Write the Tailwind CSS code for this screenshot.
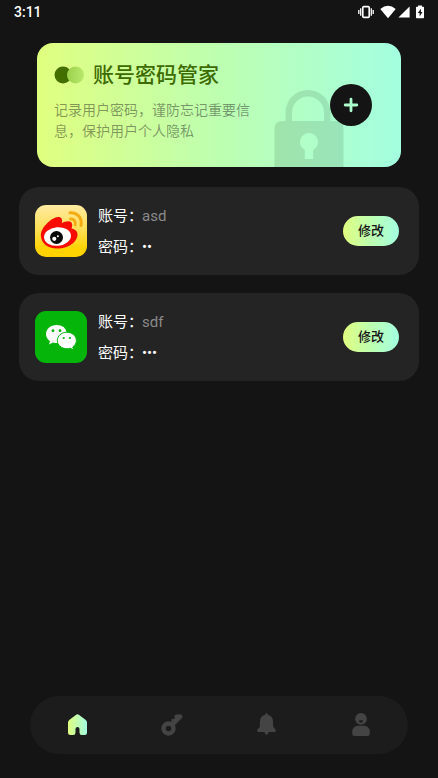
<!DOCTYPE html>
<html lang="zh-CN">
<head>
<meta charset="utf-8">
<meta name="viewport" content="width=device-width, initial-scale=1">
<title>账号密码管家</title>
<script src="https://cdn.jsdelivr.net/npm/@tailwindcss/browser@4"></script>
</head>
<body class="flex min-h-screen flex-col bg-[#141414] font-[Roboto,'Noto_Sans_CJK_SC',sans-serif] text-white">
<header class="flex h-6 items-center justify-between pr-3 pl-3.5 text-sm font-medium">
  <span>3:11</span>
  <div class="flex items-center">
    <svg class="mr-1.5 h-3.5 w-4" viewBox="0 0 16 14" fill="none" stroke="#fff" aria-hidden="true"><rect x="4.8" y="1.6" width="6.4" height="10.800" rx="1" stroke-width="1.6"/><path d="M2.700 3.200v7.600M.8 5v4M13.300 3.200v7.600M15.200 5v4" stroke-width="1.3"/></svg>
    <svg class="mr-0.5 h-3.5 w-4" viewBox="0 0 16 14" fill="#fff" aria-hidden="true"><path d="M.3 4Q8-2.300 15.700 4L8 13.200Z"/></svg>
    <svg class="mr-1 h-3.5 w-3" viewBox="0 0 12 14" fill="#fff" aria-hidden="true"><path d="M11.600 1.600v11H.4Z"/></svg>
    <svg class="h-3.5 w-3" viewBox="0 0 12 14" aria-hidden="true"><path fill="#fff" d="M4 .4h4V1.700h1.200q.8 0 .8.8v10q0 .8-.8.8H2.800q-.8 0-.8-.8V2.500Q2 1.700 2.800 1.700H4Z"/><path fill="#141414" d="M6.900 3.800 3.800 8.100h1.800v3.300l2.900-4.500H6.900Z"/></svg>
  </div>
</header>
<main class="flex flex-1 flex-col">
  <section class="relative mx-[37px] mt-[19px] flex h-[124px] flex-col overflow-hidden rounded-2xl bg-linear-to-r from-[#e0ff7e] via-[#bdffb0] to-[#a3ffe0] px-[17px] pt-4">
    <svg class="absolute right-[57px] bottom-0 h-[78px] w-[70px]" viewBox="0 0 70 78" aria-hidden="true"><g fill="#5a8a67" fill-opacity=".23"><path d="M11.500 32V23.500a22.500 22.500 0 0 1 45 0V32H50V23.500a16 16 0 0 0-32 0V32Z"/><path fill-rule="evenodd" d="M8 32H62Q69.500 32 69.500 39.500V78H.5V39.500Q.5 32 8 32ZM35 44a9 9 0 0 0-4.200 17V70h8.400V61A9 9 0 0 0 35 44Z"/></g></svg>
    <div class="flex items-center gap-2">
      <svg class="h-[18px] w-[31px]" viewBox="0 0 31 18" aria-hidden="true"><defs><linearGradient id="disc"><stop stop-color="#9bd14c"/><stop offset="1" stop-color="#b9e96c"/></linearGradient></defs><circle cx="9" cy="9" r="8.500" fill="#426e00"/><circle cx="21.500" cy="9" r="8.500" fill="url(#disc)"/></svg>
      <h1 class="text-[21px] leading-8 font-medium text-[#3c6b00]">账号密码管家</h1>
    </div>
    <p class="mt-[9px] w-[200px] text-sm leading-[21px] text-[#141414]/45">记录用户密码，谨防忘记重要信息，保护用户个人隐私</p>
    <button type="button" aria-label="添加账号" class="absolute top-[41px] right-[29px] flex size-[42px] items-center justify-center rounded-full bg-[#141414]">
      <svg class="size-4" viewBox="0 0 16 16" fill="none" stroke="#adffcc" stroke-width="2.800" stroke-linecap="round" aria-hidden="true"><path d="M8 2.200v11.600M2.200 8h11.600"/></svg>
    </button>
  </section>
  <ul class="mx-[19px] mt-5 flex flex-col gap-[18px]">
    <li class="flex h-[88px] items-center rounded-[20px] bg-[#242424] pr-5 pl-4">
      <svg class="size-[52px]" viewBox="0 0 52 52" role="img" aria-label="微博"><defs><linearGradient id="gold" x2="0" y2="1"><stop stop-color="#ffeaa2"/><stop offset=".5" stop-color="#ffdf50"/><stop offset=".85" stop-color="#ffd200"/></linearGradient></defs><rect width="52" height="52" rx="11" fill="url(#gold)"/><path fill="#f90b00" d="M6 32C5 26 9 21 14 16.500C19 12 25 10.500 26.500 13.500C27.500 15 27 17 26.800 18.200C31 15.500 36 15.500 37 18.500C37.500 20 37 22 36.500 23.500C40 24 42.500 26 42.500 29.500C42.500 36 35 43 24 43.500C14 44 7 39.500 6 32Z"/><ellipse cx="22.500" cy="31.500" rx="13.500" ry="9.300" fill="#fff" transform="rotate(-5 22.500 31.500)"/><circle cx="21.500" cy="32.500" r="6.500" fill="#0a0a0a"/><circle cx="19.300" cy="33.800" r="2.100" fill="#fff"/><circle cx="22.900" cy="31.300" r="1" fill="#fff"/><g fill="none" stroke="#f5ab13" stroke-linecap="round"><path d="M35 7.800C42 7 47.500 13 46 20.500" stroke-width="3"/><path d="M35.500 14C38.500 13.500 41.200 16.500 40.200 20" stroke-width="2.800"/></g></svg>
      <dl class="ml-[11px] flex flex-1 flex-col gap-[9px] text-[15px] leading-[22px]">
        <div class="flex"><dt class="w-11 whitespace-nowrap">账号：</dt><dd class="text-[#8a8a8a]">asd</dd></div>
        <div class="flex"><dt class="w-11 whitespace-nowrap">密码：</dt><dd>••</dd></div>
      </dl>
      <button type="button" class="h-[30px] w-14 rounded-full bg-linear-to-r from-[#e0ff7e] via-[#bdffb0] to-[#a3ffe0] text-[13px] font-medium text-[#141414]">修改</button>
    </li>
    <li class="flex h-[88px] items-center rounded-[20px] bg-[#242424] pr-5 pl-4">
      <svg class="size-[52px]" viewBox="0 0 52 52" role="img" aria-label="微信"><rect width="52" height="52" rx="11" fill="#05b50a"/><path fill="#fff" d="M21.500 14C15.500 14 11 18 11 23C11 26 12.500 28.500 15 30.200L14 33.500L18 31.400Q21.500 32.400 24 31.800L32 23Q31 14 21.500 14Z"/><path fill="#fff" stroke="#05b50a" stroke-width="1" d="M31.800 21.200C26.600 21.200 22.300 24.800 22.300 29.500C22.300 34.200 26.600 37.700 31.800 37.700Q33.700 37.700 35.200 37.200L38.700 39L37.800 36C40 34.400 41.400 32.200 41.400 29.500C41.400 24.800 37 21.200 31.800 21.200Z"/><g fill="#05b50a"><circle cx="18" cy="19.700" r="1.400"/><circle cx="25" cy="19.700" r="1.400"/><circle cx="28.700" cy="27" r="1.100"/><circle cx="34.900" cy="27" r="1.100"/></g></svg>
      <dl class="ml-[11px] flex flex-1 flex-col gap-[9px] text-[15px] leading-[22px]">
        <div class="flex"><dt class="w-11 whitespace-nowrap">账号：</dt><dd class="text-[#8a8a8a]">sdf</dd></div>
        <div class="flex"><dt class="w-11 whitespace-nowrap">密码：</dt><dd>•••</dd></div>
      </dl>
      <button type="button" class="h-[30px] w-14 rounded-full bg-linear-to-r from-[#e0ff7e] via-[#bdffb0] to-[#a3ffe0] text-[13px] font-medium text-[#141414]">修改</button>
    </li>
  </ul>
</main>
<nav aria-label="主导航" class="mx-[30px] mb-6 grid h-[58px] grid-cols-4 rounded-full bg-[#1c1c1c] text-[#444]">
  <a href="#home" aria-label="首页" aria-current="page" class="flex items-center justify-center">
    <svg class="size-6" viewBox="0 0 24 24" aria-hidden="true"><defs><linearGradient id="house"><stop stop-color="#e0ff7e"/><stop offset="1" stop-color="#a3ffe0"/></linearGradient></defs><path fill="url(#house)" d="M11.200 1.700Q12.500.7 13.800 1.700L20.800 7Q22 8 22 9.500V19.500Q22 22 19.500 22H16.800Q14.500 22 14.500 19.500V16Q14.500 14 12.500 14T10.500 16V19.500Q10.500 22 8.200 22H5.500Q3 22 3 19.500V9.500Q3 8 4.200 7Z"/></svg>
  </a>
  <a href="#passwords" aria-label="密码" class="flex items-center justify-center">
    <svg class="size-6" viewBox="0 0 24 24" fill="none" stroke="currentColor" aria-hidden="true"><circle cx="8.500" cy="15.500" r="5" stroke-width="4.400"/><path d="M12.500 11.500 20.500 3.500" stroke-width="4" stroke-linecap="round"/><path fill="currentColor" stroke="none" d="M11.500 10V6.500Q11.500 6 12 6H14.500V3Q14.500 2 15.500 1.800L17 1.500H21L20 6Z"/></svg>
  </a>
  <a href="#notices" aria-label="通知" class="flex items-center justify-center">
    <svg class="size-6" viewBox="-.5 0 24 24" fill="currentColor" aria-hidden="true"><path d="M12 0Q13 .1 13.400 1.800Q18.600 3 18.600 9V13Q19 14.800 20.600 16Q22 17.200 21 18.500Q20.500 19 19.500 19H14Q13.700 21.800 12 21.800T10 19H4.500Q3.500 19 3 18.500Q2 17.200 3.400 16Q5.200 14.800 5.400 13V9Q5.400 3 10.600 1.800Q11 .1 12 0Z"/></svg>
  </a>
  <a href="#profile" aria-label="我的" class="flex items-center justify-center">
    <svg class="size-6" viewBox="0 0 24 24" fill="currentColor" aria-hidden="true"><path fill-rule="evenodd" d="M12 0a5.900 5.900 0 0 1 0 11.800A5.900 5.900 0 0 1 12 0ZM10 7.200Q10 9.700 12 9.700T14 7.200Z"/><path d="M8.500 12.800H15.500Q20.800 13.500 20.800 19V20.500Q20.800 23 18.500 23H5.500Q3.200 23 3.200 20.500V19Q3.200 13.500 8.500 12.800Z"/></svg>
  </a>
</nav>
</body>
</html>
